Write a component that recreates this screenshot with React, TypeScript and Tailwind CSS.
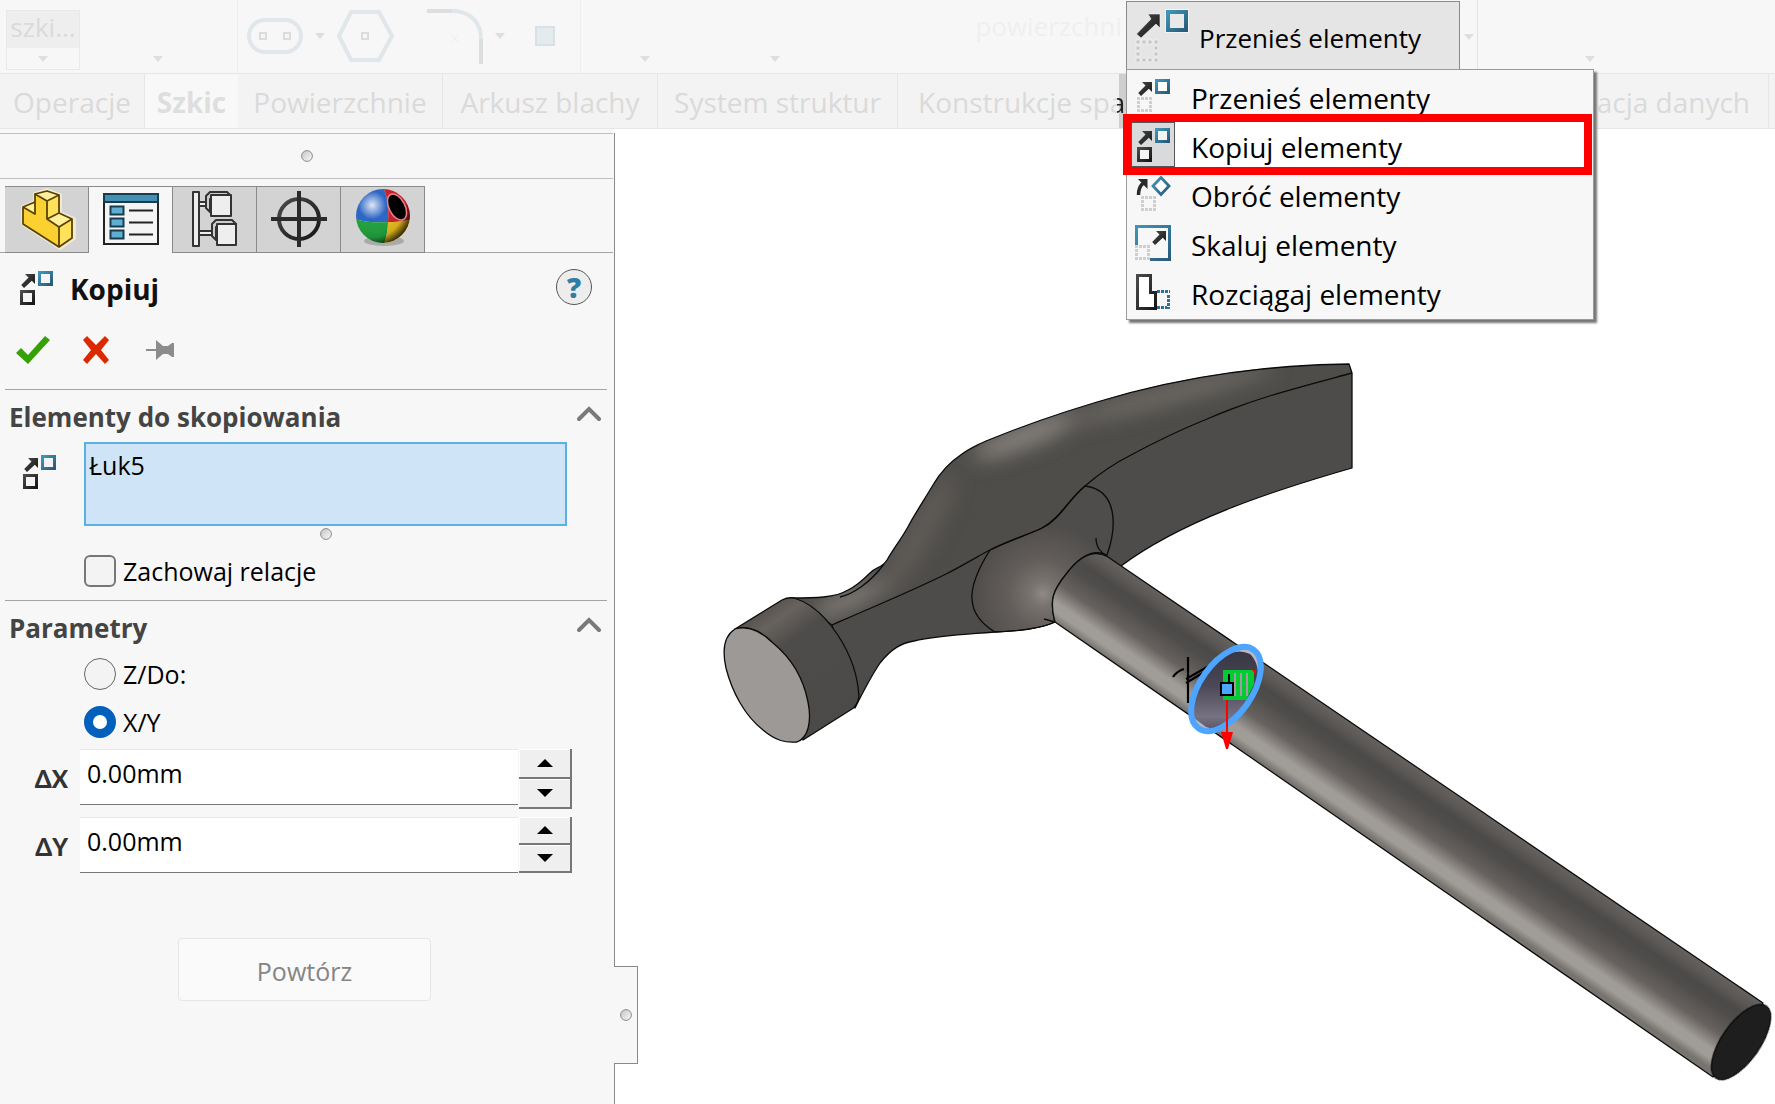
import { useState } from 'react';
import type { ReactNode } from 'react';

const TABS = ['Powierzchnie', 'Arkusz blachy', 'System struktur'];
const TAB_WIDTHS = ['w-[205px]', 'w-[215px]', 'w-[240px]'];

function Gradients() {
  return (
    <svg className="absolute h-0 w-0" aria-hidden="true">
      <defs>
        <linearGradient id="blue" x1="0" y1="0" x2="1" y2="1">
          <stop offset="0" stopColor="#3f95b9" />
          <stop offset="1" stopColor="#2b5a77" />
        </linearGradient>
        <linearGradient id="ink" x1="0" y1="0" x2="1" y2="1">
          <stop offset="0" stopColor="#4a4a4a" />
          <stop offset="1" stopColor="#161616" />
        </linearGradient>
        <linearGradient id="knob" x1="0" y1="0" x2="1" y2="1">
          <stop offset="0" stopColor="#c4c4c4" />
          <stop offset="1" stopColor="#fafafa" />
        </linearGradient>
      </defs>
    </svg>
  );
}

function Dots({ x, y, color = '#cfcfcf' }: { x: number; y: number; color?: string }) {
  return (
    <path
      transform={`translate(${x} ${y})`}
      fill={color}
      d="M0 0h3v3H0zM4 0h3v3H4zM8 0h3v3H8zM12 0h3v3h-3zM0 4h3v3H0zM12 4h3v3h-3zM0 8h3v3H0zM12 8h3v3h-3zM0 12h3v3H0zM4 12h3v3H4zM8 12h3v3H8zM12 12h3v3h-3z"
    />
  );
}

function Arrow({ x, y }: { x: number; y: number }) {
  return (
    <path
      transform={`translate(${x} ${y})`}
      fill="url(#ink)"
      d="M5 1h10v10l-3.200-3.200L4 15l-2.800-3L8.500 4.500z"
    />
  );
}

function MoveIcon() {
  return (
    <svg viewBox="0 0 36 36" className="h-9 w-9">
      <Arrow x={2} y={3} />
      <rect x="21.5" y="2.500" width="12" height="12" fill="#fff" stroke="url(#blue)" strokeWidth="3" />
      <Dots x={2} y={19} />
    </svg>
  );
}

function CopyIcon() {
  return (
    <svg viewBox="0 0 36 36" className="h-9 w-9">
      <Arrow x={2} y={3} />
      <rect x="21.500" y="2.500" width="12" height="12" fill="#f4f4f4" stroke="url(#blue)" strokeWidth="3" />
      <rect x="3.500" y="21.500" width="12" height="12" fill="#f4f4f4" stroke="url(#ink)" strokeWidth="3" />
    </svg>
  );
}

function RotateIcon() {
  return (
    <svg viewBox="0 0 36 36" className="h-9 w-9">
      <path d="M3.500 19c0-6 1-9 5-12" fill="none" stroke="#2a2a2a" strokeWidth="3.500" />
      <path d="M3 3h9.500v10z" fill="#2a2a2a" />
      <path d="M26 1.500l8 8.500-8 8.500-8-8.500z" fill="#fff" stroke="url(#blue)" strokeWidth="2.800" />
      <Dots x={6} y={20} />
    </svg>
  );
}

function ScaleIcon() {
  return (
    <svg viewBox="0 0 36 36" className="h-9 w-9">
      <path d="M1.500 20V1.500h33v33H15" fill="none" stroke="url(#blue)" strokeWidth="3" />
      <Arrow x={16} y={5} />
      <Dots x={0} y={20} />
    </svg>
  );
}

function StretchIcon() {
  return (
    <svg viewBox="0 0 36 36" className="h-9 w-9">
      <path d="M2.500 1.500h13v17h5v16h-18z" fill="#fff" stroke="url(#ink)" strokeWidth="3" />
      <path d="M22 17.500h13M33.500 21v14M22 33.500h10" stroke="#2f6f92" strokeWidth="3" strokeDasharray="3 1" />
    </svg>
  );
}

const COMMANDS = [
  { label: 'Przenieś elementy', icon: <MoveIcon /> },
  { label: 'Kopiuj elementy', icon: <CopyIcon /> },
  { label: 'Obróć elementy', icon: <RotateIcon /> },
  { label: 'Skaluj elementy', icon: <ScaleIcon /> },
  { label: 'Rozciągaj elementy', icon: <StretchIcon /> },
];

function Caret({ className = '' }: { className?: string }) {
  return (
    <svg viewBox="0 0 10 6" className={`h-1.5 w-2.5 shrink-0 ${className}`}>
      <path d="M0 0h10L5 6z" fill="#dedede" />
    </svg>
  );
}

function Knob() {
  return (
    <svg viewBox="0 0 12 12" className="h-3 w-3">
      <circle cx="6" cy="6" r="5.400" fill="url(#knob)" stroke="#8c8c8c" />
    </svg>
  );
}

function CommandMenu() {
  return (
    <div className="relative z-10 w-[334px] shrink-0">
      <button className="mt-px flex h-[69px] w-full items-center gap-2 border border-[#8a8a8a] bg-[#e5e5e5] pl-2 text-left text-[26px] leading-9">
        <svg viewBox="0 0 56 56" className="h-14 w-14 shrink-0">
          <path d="M13 6h12v14l-4-4L6 30l-4.500-4L16 11z" fill="url(#ink)" stroke="#f4f4f4" strokeWidth=".6" />
          <rect x="33" y="4" width="18" height="18" fill="#e9e9e9" stroke="#f4f4f4" strokeWidth="6" />
          <rect x="33" y="4" width="18" height="18" fill="#e9e9e9" stroke="url(#blue)" strokeWidth="4" />
          <path
            d="M1 32h4v4H1zM7 32h4v4H7zM13 32h4v4h-4zM19 32h4v4h-4zM1 38h4v4H1zM19 38h4v4h-4zM1 44h4v4H1zM19 44h4v4h-4zM1 50h4v4H1zM7 50h4v4H7zM13 50h4v4h-4zM19 50h4v4h-4z"
            fill="#c6c6c6"
            stroke="#f2f2f2"
            strokeWidth=".8"
          />
        </svg>
        <span className="pt-1">Przenieś elementy</span>
      </button>
      <ul
        role="menu"
        className="absolute top-[69px] left-0 flex w-[468px] flex-col gap-1 border border-[#9a9a9a] bg-[#f7f7f7] pt-[3px] pr-[9px] pb-[5px] pl-1 shadow-[3px_3px_2px_#777]"
      >
        {COMMANDS.map((command, i) => (
          <li key={command.label} role="none">
            <button
              role="menuitem"
              className={`flex h-[45px] w-full items-center gap-4 text-left text-[28px] leading-9 ${
                i === 1 ? 'bg-white outline-8 outline-[#fe0000]' : ''
              }`}
            >
              <span
                className={`flex h-[45px] w-11 items-center justify-center border ${
                  i === 1 ? 'border-[#555] bg-[#d9dadc]' : 'border-transparent'
                }`}
              >
                {command.icon}
              </span>
              <span className="pt-1">{command.label}</span>
            </button>
          </li>
        ))}
      </ul>
    </div>
  );
}

function Toolbar() {
  return (
    <div className="flex h-[73px]">
      <div className="flex w-[238px] shrink-0 border-r border-[#efefef] pt-2.5 pl-1.5">
        <div className="flex h-[60px] w-[74px] flex-col items-center border border-[#e9e9e9]">
          <span className="flex h-[37px] w-full items-center justify-center bg-[#eee] pb-1 text-[26px] text-[#dadada]">
            szki...
          </span>
          <Caret className="mt-2" />
        </div>
        <Caret className="mt-[46px] ml-[73px]" />
      </div>
      <div className="flex w-[343px] shrink-0 items-start border-r border-[#efefef] pt-2 pl-2">
        <svg viewBox="0 0 322 60" className="h-[60px] w-[322px]" fill="none">
          <rect x="3" y="12" width="52" height="32" rx="16" stroke="#e0e7eb" strokeWidth="4" />
          <path d="M14 25h6v6h-6zM38 25h6v6h-6zM116 25h6v6h-6z" stroke="#dcdcdc" strokeWidth="2" />
          <path d="M69 25h10l-5 6zM249 25h10l-5 6z" fill="#dedede" />
          <path d="M105 4h28l13 24-13 24h-28L93 28z" stroke="#e0e7eb" strokeWidth="4" />
          <path d="M181 3h30M235 30v26" stroke="#dedede" strokeWidth="4" />
          <path d="M206 3c19 0 29 12 29 28" stroke="#e0e7eb" strokeWidth="4" />
          <path d="M206 27l6 7m0-7l-6 7" stroke="#efefef" />
          <rect x="290" y="19" width="18" height="18" fill="#e3ebef" stroke="#d9e1e5" strokeWidth="2" />
        </svg>
      </div>
      <div className="flex w-[545px] shrink-0 pl-[59px]">
        <Caret className="mt-14" />
        <Caret className="mt-14 ml-[120px]" />
        <span className="mt-2 ml-auto pr-1 text-[26px] leading-9 text-[#efefef]">powierzchni</span>
      </div>
      <CommandMenu />
      <div className="flex w-[18px] shrink-0 items-center justify-center border-r border-[#e4e4e4]">
        <Caret />
      </div>
      <div className="flex-1 pl-[107px]">
        <Caret className="mt-14" />
      </div>
    </div>
  );
}

function RibbonTabs() {
  return (
    <nav className="flex h-14 overflow-hidden border-y border-[#e6e6e6] bg-[#f3f3f3] text-[28px] leading-[56px] whitespace-nowrap text-[#dadada]">
      <a href="#operacje" className="w-[145px] shrink-0 border-r border-[#e6e6e6] text-center">
        Operacje
      </a>
      <a href="#szkic" className="w-[93px] shrink-0 bg-[#f8f8f8] text-center font-bold text-[#dedede]">
        Szkic
      </a>
      {TABS.map((tab, i) => (
        <a key={tab} href="#tab" className={`shrink-0 border-r border-[#e6e6e6] text-center ${TAB_WIDTHS[i]}`}>
          {tab}
        </a>
      ))}
      <a href="#konstrukcje" className="w-[229px] shrink-0 bg-linear-to-l from-[#cfcfcf] from-[8px] to-[#f3f3f3] to-[8px] pl-5">
        Konstrukcje sp
        <span className="bg-linear-to-r from-[#dadada] from-50% to-[#222] to-50% bg-clip-text text-transparent">
          a
        </span>
      </a>
      <a href="#migracja" className="ml-auto mr-[6px] border-r border-[#e6e6e6] pr-[18px]">
        acja danych
      </a>
    </nav>
  );
}

function PanelTab({ active, label, children }: { active?: boolean; label: string; children: ReactNode }) {
  return (
    <button
      role="tab"
      aria-label={label}
      aria-selected={!!active}
      className={`h-[67px] w-[84px] border-t border-r border-[#8a8a8a] ${
        active ? 'bg-[#f7f7f7]' : 'border-b bg-[#d3d3d3]'
      }`}
    >
      <svg viewBox="0 0 84 66" className="h-[66px] w-[84px]" fill="none">
        {children}
      </svg>
    </button>
  );
}

function PanelTabs() {
  return (
    <div role="tablist" className="mt-[7px] flex w-[613px] bg-[linear-gradient(#a5a5a5,#a5a5a5)] bg-size-[100%_1px] bg-bottom bg-no-repeat pl-[5px]">
      <PanelTab label="Drzewo operacji">
        <path d="M18 20l12-5V7l12-4 13 5v18l14 6v19l-14 10L18 37z" stroke="#efe9d4" strokeWidth="4" />
        <path d="M18 20l12-5V7l12-3 12 4v18l13 6v19L54 60 18 37z" fill="#fbd031" />
        <path d="M30 7l12-3 12 4-12 6zM18 20l12-5v12zM54 26l13 6-13 8-12-8z" fill="#fff09a" />
        <path d="M42 14l12-6v18l-12 6zM54 40l13-8v19l-13 9z" fill="#ffe25a" />
        <path
          d="M18 20l12-5V7l12-3 12 4v18l13 6v19L54 60 18 37zM18 20l12 7V7l12 7 12-6M42 14v18l12 8v20M54 40l13-8M42 32l12-6"
          stroke="#5a4200"
          strokeWidth="1.800"
          strokeLinejoin="round"
        />
      </PanelTab>
      <PanelTab active label="Właściwości">
        <rect x="15" y="7" width="54" height="50" fill="#f4f4f4" stroke="#222" strokeWidth="2" />
        <rect x="15" y="7" width="54" height="8" fill="#4390b2" stroke="#173c50" strokeWidth="2" />
        <path d="M21.500 19.500h13v8h-13zM21.500 31.500h13v8h-13zM21.500 43.500h13v8h-13z" fill="#60aed0" stroke="#173c50" strokeWidth="2" />
        <path d="M40 23.500h24M40 35.500h24M40 47.500h24" stroke="#222" strokeWidth="2" />
      </PanelTab>
      <PanelTab label="Konfiguracje">
        <g fill="#eee" stroke="#333" strokeWidth="2" strokeLinejoin="round">
          <path d="M26 15h9v4h-9zM26 44h14v4H26z" />
          <path d="M20 5h6v54h-6z" />
          <path d="M33 9l4-4h17l4 4v3H37v13l-4-4zM39 37l4-4h16l4 4v3H43v13l-4-4z" fill="#ccc" />
          <path d="M38 8h20v21H38zM44 37h19v21H44z" />
        </g>
      </PanelTab>
      <PanelTab label="Wymiary">
        <circle cx="42" cy="32" r="20" stroke="url(#ink)" strokeWidth="4" />
        <path d="M42 4v56M14 32h56" stroke="#2a2a2a" strokeWidth="4" />
      </PanelTab>
      <PanelTab label="Wygląd">
        <defs>
          <radialGradient id="gloss" cx=".3" cy=".3" r=".75">
            <stop offset="0" stopColor="#fff" stopOpacity=".85" />
            <stop offset=".35" stopColor="#fff" stopOpacity="0" />
            <stop offset=".8" stopColor="#000" stopOpacity=".1" />
            <stop offset="1" stopColor="#000" stopOpacity=".7" />
          </radialGradient>
          <clipPath id="ball">
            <circle cx="42" cy="29" r="27" />
          </clipPath>
        </defs>
        <ellipse cx="43" cy="54" rx="20" ry="5" fill="#aaa" />
        <g clipPath="url(#ball)">
          <path d="M10 0h32c5 10 6 22 5 35-12 1-25 0-37-4z" fill="#2c65c4" />
          <path d="M10 31c12 4 25 5 37 4 0 8-2 17-5 25H10z" fill="#1fa03c" />
          <path d="M42 0h30v32c-8 2-16 3-25 3 1-13 0-25-5-35z" fill="#c81f28" />
          <path d="M47 35c9 0 17-1 25-3v28H42c3-8 5-17 5-25z" fill="#e9bd1e" />
          <circle cx="42" cy="29" r="27" fill="url(#gloss)" />
          <ellipse cx="56" cy="20" rx="8" ry="14" transform="rotate(-27 56 20)" fill="#000" stroke="#f08088" strokeWidth="1.500" />
        </g>
      </PanelTab>
    </div>
  );
}

function Section({ title, children }: { title: string; children: ReactNode }) {
  const [open, setOpen] = useState(true);

  return (
    <section className="mr-[7px] ml-[5px] border-t border-[#a5a5a5]">
      <button
        aria-expanded={open}
        onClick={() => setOpen(!open)}
        className="flex h-[52px] w-full items-center justify-between pr-1.5 pl-1 text-[26px] font-bold text-[#444]"
      >
        <span className="pt-0.5">{title}</span>
        <svg viewBox="0 0 24 16" className="mb-1 h-4 w-6" fill="none">
          <path d="M2 13L12 3l10 10" stroke="#7a7a7a" strokeWidth="4" strokeLinecap="round" />
        </svg>
      </button>
      {open && children}
    </section>
  );
}

function Spinner({ axis, buttonHeight }: { axis: string; buttonHeight: string }) {
  const [value, setValue] = useState('0.00mm');
  const step = (delta: number): void => setValue(`${(parseFloat(value) + delta).toFixed(2)}mm`);
  const button = `flex w-[53px] items-center justify-center border-r-2 border-b-2 border-[#777] bg-[#efefef] shadow-[inset_1px_1px_#fff] ${buttonHeight}`;

  return (
    <div className="flex items-start">
      <label htmlFor={axis} className="w-[75px] pt-4 pr-3 text-right font-['Lato'] text-[24px] leading-7 font-black text-[#333]">
        {axis}
      </label>
      <input
        id={axis}
        value={value}
        onChange={(e) => setValue(e.target.value)}
        className="h-14 w-[438px] border-t border-b border-t-[#e8e8e8] border-b-[#777] bg-white px-[7px] pb-2 text-[25px] text-black outline-none"
      />
      <div className="ml-px flex flex-col">
        <button aria-label={`${axis} +`} className={button} onClick={() => step(1)}>
          <svg viewBox="0 0 16 8" className="h-2 w-4">
            <path d="M0 8h16L8 0z" />
          </svg>
        </button>
        <button aria-label={`${axis} -`} className={button} onClick={() => step(-1)}>
          <svg viewBox="0 0 16 8" className="h-2 w-4">
            <path d="M0 0h16L8 8z" />
          </svg>
        </button>
      </div>
    </div>
  );
}

function PropertyPanel() {
  const [keep, setKeep] = useState(false);
  const [mode, setMode] = useState('xy');
  const radio =
    "h-8 w-8 appearance-none rounded-full border border-[#666] bg-[#f3f3f3] checked:border-[9px] checked:border-[#0060bb] checked:bg-white";

  return (
    <aside className="w-[615px] shrink-0 border-r border-[#8a8a8a] bg-[#f7f7f7] text-[25px] text-black">
      <div className="flex h-[46px] w-[613px] items-center justify-center border-y border-[#c0c0c0]">
        <Knob />
      </div>
      <PanelTabs />
      <header className="flex h-[70px] items-center pr-[22px] pl-[18px]">
        <CopyIcon />
        <h1 className="pt-0.5 pl-4 text-[28px] font-bold text-[#111]">Kopiuj</h1>
        <button
          aria-label="Pomoc"
          className="mb-0.5 ml-auto flex h-9 w-9 items-center justify-center rounded-full border border-[#555] bg-[#ededed] font-['Open_Sans'] text-[28px] leading-8 font-extrabold text-[#2f7ea4]"
        >
          ?
        </button>
      </header>
      <div className="flex h-[66px] items-center gap-8 pb-3 pl-4">
        <button aria-label="OK">
          <svg viewBox="0 0 34 28" className="h-7 w-[34px]">
            <path d="M0 17l5-5 7 7L29 0l5 4-22 24z" fill="#36a007" />
          </svg>
        </button>
        <button aria-label="Anuluj">
          <svg viewBox="0 0 28 28" className="h-7 w-7">
            <path d="M5 0l9 9 9-9 4 4-8 10 8 10-4 4-9-10-9 10-4-4 8-10L1 4z" fill="#dd2900" />
          </svg>
        </button>
        <button aria-label="Przypnij" className="pl-1">
          <svg viewBox="0 0 28 20" className="h-5 w-7">
            <path d="M0 9h10V0l7 6h5l4-3h2v14h-2l-4-3h-5l-7 6v-9H0z" fill="#8c8c8c" />
          </svg>
        </button>
      </div>
      <Section title="Elementy do skopiowania">
        <div className="flex pl-4">
          <div className="w-[63px] pt-3">
            <CopyIcon />
          </div>
          <div>
            <textarea
              aria-label="Elementy do skopiowania"
              defaultValue="Łuk5"
              className="block h-[84px] w-[483px] resize-none border-2 border-[#5aafe3] bg-[#cfe4f7] px-[3px] py-1 leading-[34px] outline-none"
            />
            <div className="flex h-4 items-center justify-center">
              <Knob />
            </div>
          </div>
        </div>
        <label className="flex h-[58px] items-center gap-[7px] pl-[79px]">
          <input
            type="checkbox"
            checked={keep}
            onChange={() => setKeep(!keep)}
            className="h-8 w-8 appearance-none rounded-md border-2 border-[#777] bg-[#f3f3f3] checked:bg-[#0060bb]"
          />
          <span className="pt-0.5">Zachowaj relacje</span>
        </label>
      </Section>
      <Section title="Parametry">
        <label className="flex h-12 items-center gap-[7px] pb-1.5 pl-[79px]">
          <input type="radio" name="mode" checked={mode === 'z'} onChange={() => setMode('z')} className={radio} />
          <span className="pt-0.5">Z/Do:</span>
        </label>
        <label className="flex h-12 items-center gap-[7px] pb-1.5 pl-[79px]">
          <input type="radio" name="mode" checked={mode === 'xy'} onChange={() => setMode('xy')} className={radio} />
          <span className="pt-0.5">X/Y</span>
        </label>
        <div className="flex flex-col gap-2">
          <Spinner axis="ΔX" buttonHeight="h-[30px]" />
          <Spinner axis="ΔY" buttonHeight="h-7" />
        </div>
      </Section>
      <button disabled className="mt-[65px] ml-[178px] h-[63px] w-[253px] rounded border border-[#e6e6e6] bg-[#fafafa] pt-1 text-[#858585]">
        Powtórz
      </button>
    </aside>
  );
}

const HEAD =
  'M790 598C815 598 835 598 848 590C857 586 863 580 870 573C876 567 882 568 887 560C897 543 903 537 910 523C918 509 924 500 933 485C941 471 950 462 962 454C969 449 977 445 986 441C1020 427 1057 414 1097 402C1180 377 1260 365 1349 364L1352 373V468C1265 493 1180 522 1121 566L1055 622C1035 631 1010 631 995 632C965 634 935 636 914 641C902 643 892 648 880 663C870 678 864 690 855 708L832 625Z';

function Hammer() {
  return (
    <svg viewBox="615 129 1160 975" preserveAspectRatio="xMaxYMin meet" className="w-full">
      <defs>
        <linearGradient id="shaft" gradientUnits="userSpaceOnUse" x1="1108" y1="557" x2="1061" y2="626">
          <stop offset="0" stopColor="#65625f" />
          <stop offset=".13" stopColor="#5a5755" />
          <stop offset=".24" stopColor="#4b4a48" />
          <stop offset=".36" stopColor="#4f4d4b" />
          <stop offset=".6" stopColor="#67625f" />
          <stop offset=".8" stopColor="#a09c98" />
          <stop offset=".9" stopColor="#a09c98" />
          <stop offset="1" stopColor="#77736f" />
        </linearGradient>
        <linearGradient id="cut" x1="0" y1="0" x2="0" y2="1">
          <stop offset="0" stopColor="#383642" />
          <stop offset=".45" stopColor="#4b4857" />
          <stop offset=".85" stopColor="#777282" />
          <stop offset="1" stopColor="#5e5968" />
        </linearGradient>
        <linearGradient id="rim" gradientUnits="userSpaceOnUse" x1="755" y1="612" x2="838" y2="725">
          <stop offset="0" stopColor="#55514e" />
          <stop offset=".14" stopColor="#67625e" />
          <stop offset=".32" stopColor="#4d4c4a" />
          <stop offset="1" stopColor="#4b4a48" />
        </linearGradient>
        <radialGradient id="socket" gradientUnits="userSpaceOnUse" cx="1043" cy="594" r="78">
          <stop offset="0" stopColor="#8f8a86" />
          <stop offset=".16" stopColor="#78736f" />
          <stop offset=".45" stopColor="#625d5a" />
          <stop offset=".9" stopColor="#4f4d4b" />
        </radialGradient>
        <filter id="soft" x="-50%" y="-50%" width="200%" height="200%">
          <feGaussianBlur stdDeviation="10" />
        </filter>
        <clipPath id="head">
          <path d={HEAD} />
        </clipPath>
      </defs>
      <g stroke="#0b0b0b" strokeWidth="1.300" strokeLinejoin="round" fill="none">
        <path d={HEAD} fill="#4e4d4a" stroke="none" />
        <g clipPath="url(#head)">
          <g stroke="none" filter="url(#soft)">
            <ellipse cx="1025" cy="436" rx="56" ry="11" transform="rotate(-21 1025 436)" fill="#8a8581" />
            <ellipse cx="1170" cy="394" rx="110" ry="8" transform="rotate(-15 1170 394)" fill="#74706c" />
            <ellipse cx="918" cy="535" rx="70" ry="13" transform="rotate(-60 918 535)" fill="#615c58" />
            <ellipse cx="848" cy="600" rx="40" ry="9" transform="rotate(-25 848 600)" fill="#85807c" />
          </g>
          <path
            d="M832 625C870 608 910 592 946 574C962 566 978 556 990 550C1010 540 1025 536 1042 528C1060 518 1068 500 1085 486C1100 473 1115 463 1131 455C1155 442 1180 430 1207 419C1255 398 1300 387 1352 373V720H832Z"
            fill="#4d4c4a"
            stroke="none"
          />
        </g>
        <path
          d="M990 550C968 585 962 612 995 632C1020 631 1040 629 1055 622C1049 600 1053 590 1067 573C1080 556 1094 549 1107 555C1117 527 1118 490 1085 486C1068 500 1060 520 1042 528C1025 536 1010 540 990 550Z"
          fill="url(#socket)"
        />
        <path d={HEAD} />
        <path d="M840 597C853 594 870 583 884 564" />
        <path d="M832 625C870 608 910 592 946 574C962 566 978 556 990 550C1010 540 1025 536 1042 528C1060 518 1068 500 1085 486C1100 473 1115 463 1131 455C1155 442 1180 430 1207 419C1255 398 1300 387 1352 373" />
        <path d="M1096 538C1096 547 1100 552 1108 557M1044 619l11 3" />
        <path d="M735 629L782 600Q788 597 794 598C827 608 857 655 859 697Q857 706 852 709L803 740Z" fill="url(#rim)" />
        <path d="M735 629C724 636 722 650 726 668C732 692 745 716 763 730C776 741 786 743 797 742C808 738 812 722 808 702C803 676 790 657 773 643C761 631 748 625 735 629Z" fill="#9d9996" />
        <path d="M1108 557L1763 1003L1713 1077L1055 622C1049 600 1053 590 1067 573C1080 556 1094 549 1108 557Z" fill="url(#shaft)" />
        <ellipse cx="1741" cy="1042" rx="44" ry="19" transform="rotate(-55 1741 1042)" fill="#1e1e1e" />
      </g>
      <path d="M1173 677q4-6 11-8M1186 679l30-17M1186 683l20-12M1188 657v46" fill="none" stroke="#000" strokeWidth="2.200" />
      <ellipse cx="1226" cy="689" rx="46" ry="23" transform="rotate(-55 1226 689)" fill="#b9b7c6" />
      <path d="M1250 654C1262 666 1260 685 1247 705C1236 722 1220 732 1206 727L1190 715C1190 690 1205 665 1225 656Q1238 648 1250 654Z" fill="url(#cut)" />
      <path d="M1223 670h31v14l-8 16h-23z" fill="#00cb33" />
      <path d="M1235 673v23M1241 673v23M1247 673v23" stroke="#a69ba0" strokeWidth="2" />
      <path d="M1229 674v9" stroke="#000" strokeWidth="2" />
      <path d="M1252 670h4v5z" fill="#fe0000" />
      <path d="M1227 700v34" stroke="#fe0000" strokeWidth="2" />
      <ellipse cx="1226" cy="689" rx="48" ry="26" transform="rotate(-55 1226 689)" fill="none" stroke="#4ea5ff" strokeWidth="6" />
      <path d="M1227 716v20" stroke="#fe0000" strokeWidth="2" />
      <path d="M1221 732h12l-5 17h-2z" fill="#fe0000" />
      <rect x="1221" y="683" width="12" height="12" fill="#4ea5ff" stroke="#000" strokeWidth="2" />
    </svg>
  );
}

export default function App() {
  return (
    <div className="flex min-h-screen flex-col overflow-hidden bg-[#f7f7f7] font-['Open_Sans','Noto_Sans',sans-serif] text-black">
      <Gradients />
      <Toolbar />
      <RibbonTabs />
      <div className="flex flex-1 bg-white">
        <div className="flex bg-[#f7f7f7] pt-1">
          <PropertyPanel />
        </div>
        <div className="relative min-w-0 flex-1">
          <button
            aria-label="Zwiń panel"
            className="absolute top-[837px] -left-px flex h-[98px] w-6 items-center justify-center border border-l-0 border-[#8a8a8a] bg-[#f7f7f7]"
          >
            <Knob />
          </button>
          <Hammer />
        </div>
      </div>
    </div>
  );
}
